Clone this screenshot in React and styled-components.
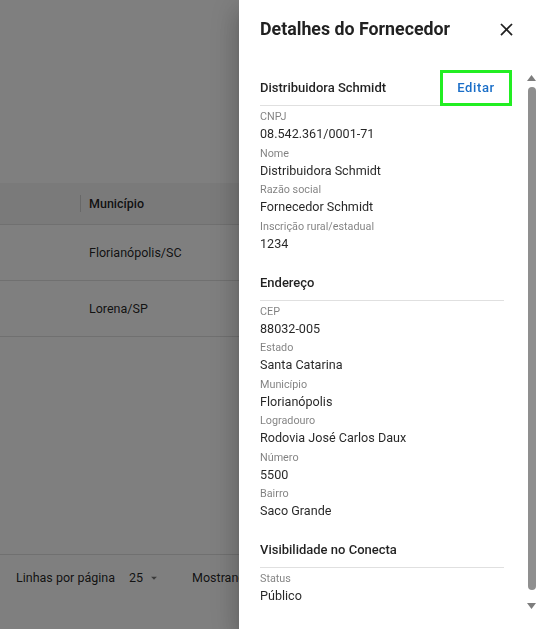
import React from "react";
import styled, { createGlobalStyle } from "styled-components";

const GlobalStyle = createGlobalStyle`
  html, body { margin: 0; padding: 0; }
  body {
    font-family: Roboto, "Noto Sans", Arial, sans-serif;
    color: rgba(0, 0, 0, 0.87);
    overflow: hidden;
  }
  * { box-sizing: border-box; }
`;

/* ---------- page underneath ---------- */

const Page = styled.div`
  height: 100vh;
  background: #ffffff;
  display: flex;
  flex-direction: column;
`;

const Table = styled.div`
  margin-top: 183px;
  display: flex;
  flex-direction: column;
`;

const HeadRow = styled.div`
  height: 42px;
  background: #f5f5f5;
  border-bottom: 1px solid #e0e0e0;
  display: grid;
  grid-template-columns: 80px 1fr;
  align-items: center;
`;

const HeadCell = styled.div`
  height: 100%;
  display: flex;
  align-items: center;
  padding-left: 9px;
  font-size: 12.5px;
  font-weight: 500;
  color: rgba(0, 0, 0, 0.87);
  position: relative;
`;

/* thin divider drawn on the left edge of a header cell */
const ColSep = styled.span`
  position: absolute;
  left: 0;
  top: 12px;
  bottom: 12px;
  width: 1px;
  background: #d0d0d0;
`;

const BodyRow = styled.div`
  height: 56px;
  border-bottom: 1px solid #e0e0e0;
  display: grid;
  grid-template-columns: 80px 1fr;
  align-items: center;
`;

const BodyCell = styled.div`
  padding-left: 9px;
  font-size: 12.5px;
  color: rgba(0, 0, 0, 0.87);
`;

const Footer = styled.div`
  margin-top: auto;
  margin-bottom: 29px;
  height: 46px;
  border-top: 1px solid #e0e0e0;
  display: flex;
  align-items: center;
  padding-left: 16px;
  font-size: 12.5px;
  color: rgba(0, 0, 0, 0.87);
  white-space: nowrap;
`;

const PerPage = styled.div`
  display: flex;
  align-items: center;
  margin-left: 14px;
  gap: 4px;
`;

const Showing = styled.span`
  margin-left: 31px;
`;

/* ---------- drawer ---------- */

const Backdrop = styled.div`
  position: fixed;
  inset: 0;
  background: rgba(0, 0, 0, 0.5);
`;

const Drawer = styled.aside`
  position: fixed;
  top: 0;
  right: 0;
  bottom: 0;
  width: 299px;
  background: #ffffff;
  box-shadow: 0 8px 10px -5px rgba(0, 0, 0, 0.2),
    0 16px 24px 2px rgba(0, 0, 0, 0.14), 0 6px 30px 5px rgba(0, 0, 0, 0.12);
  display: flex;
  flex-direction: column;
  padding-bottom: 15px;
`;

const DrawerHead = styled.div`
  height: 70px;
  display: flex;
  align-items: flex-start;
  justify-content: space-between;
  padding: 16px 21px 0 21px;
`;

const Title = styled.h2`
  margin: 0;
  font-size: 17.8px;
  line-height: 26px;
  font-weight: 700;
  color: rgba(0, 0, 0, 0.87);
`;

const CloseButton = styled.button`
  border: 0;
  background: none;
  padding: 0;
  width: 21px;
  height: 21px;
  margin-top: 3px;
  display: flex;
  align-items: center;
  justify-content: center;
  color: rgba(0, 0, 0, 0.87);
  cursor: pointer;
`;

const Body = styled.div`
  flex: 1;
  display: flex;
  min-height: 0;
`;

const Content = styled.div`
  flex: 0 0 244px;
  margin-left: 21px;
  padding-top: 1px;
`;

const Section = styled.section`
  & + & {
    margin-top: 13px;
  }
`;

const SectionHead = styled.div`
  height: 35px;
  border-bottom: 1px solid #e0e0e0;
  display: flex;
  align-items: center;
  justify-content: space-between;
  padding-bottom: 1px;
  margin-bottom: 3px;
`;

const SectionTitle = styled.h3`
  margin: 0;
  font-size: 13px;
  font-weight: 500;
  color: rgba(0, 0, 0, 0.87);
`;

const EditButton = styled.button`
  flex: none;
  height: 36px;
  width: 72px;
  margin: 0 -8px 0 0;
  border: 3px solid #22ee22;
  background: #ffffff;
  color: #1a6ec8;
  font-family: inherit;
  font-size: 13px;
  font-weight: 500;
  letter-spacing: 0.6px;
  cursor: pointer;
`;

const Field = styled.div`
  display: flex;
  flex-direction: column;
  margin-bottom: 2.5px;
`;

const Label = styled.span`
  font-size: 10.8px;
  line-height: 15px;
  color: rgba(0, 0, 0, 0.5);
`;

const Value = styled.span`
  font-size: 12.6px;
  line-height: 19px;
  color: rgba(0, 0, 0, 0.85);
`;

const ScrollTrack = styled.div`
  margin-left: auto;
  margin-right: 1px;
  width: 11px;
  display: flex;
  flex-direction: column;
  align-items: center;
`;

const ScrollButton = styled.div`
  height: 16px;
  display: flex;
  align-items: center;
  justify-content: center;
  color: #7d7d7d;
`;

const Thumb = styled.div`
  flex: 1;
  width: 8px;
  margin: 1px 0 8px;
  border-radius: 4px;
  background: #8f8f8f;
`;

const Arrow = ({ up }) => (
  <svg width="9" height="6" viewBox="0 0 9 6">
    <path d={up ? "M4.5 0 9 6H0z" : "M0 0h9L4.5 6z"} fill="currentColor" />
  </svg>
);

const CloseIcon = () => (
  <svg width="21" height="21" viewBox="0 0 24 24">
    <path
      fill="currentColor"
      d="M19 6.41 17.59 5 12 10.59 6.41 5 5 6.41 10.59 12 5 17.59 6.41 19 12 13.41 17.59 19 19 17.59 13.41 12z"
    />
  </svg>
);

const sections = [
  {
    title: "Distribuidora Schmidt",
    editable: true,
    fields: [
      ["CNPJ", "08.542.361/0001-71"],
      ["Nome", "Distribuidora Schmidt"],
      ["Razão social", "Fornecedor Schmidt"],
      ["Inscrição rural/estadual", "1234"],
    ],
  },
  {
    title: "Endereço",
    fields: [
      ["CEP", "88032-005"],
      ["Estado", "Santa Catarina"],
      ["Município", "Florianópolis"],
      ["Logradouro", "Rodovia José Carlos Daux"],
      ["Número", "5500"],
      ["Bairro", "Saco Grande"],
    ],
  },
  {
    title: "Visibilidade no Conecta",
    fields: [["Status", "Público"]],
  },
];

export default function App() {
  return (
    <>
      <GlobalStyle />
      <Page>
        <Table>
          <HeadRow>
            <div />
            <HeadCell>
              <ColSep />
              Município
            </HeadCell>
          </HeadRow>
          <BodyRow>
            <div />
            <BodyCell>Florianópolis/SC</BodyCell>
          </BodyRow>
          <BodyRow>
            <div />
            <BodyCell>Lorena/SP</BodyCell>
          </BodyRow>
        </Table>
        <Footer>
          Linhas por página
          <PerPage>
            25
            <svg width="14" height="14" viewBox="0 0 24 24">
              <path d="M7 10l5 5 5-5z" fill="rgba(0,0,0,0.54)" />
            </svg>
          </PerPage>
          <Showing>Mostrando</Showing>
        </Footer>
      </Page>
      <Backdrop />
      <Drawer>
        <DrawerHead>
          <Title>Detalhes do Fornecedor</Title>
          <CloseButton aria-label="Fechar">
            <CloseIcon />
          </CloseButton>
        </DrawerHead>
        <Body>
          <Content>
            {sections.map((s) => (
              <Section key={s.title}>
                <SectionHead>
                  <SectionTitle>{s.title}</SectionTitle>
                  {s.editable && <EditButton>Editar</EditButton>}
                </SectionHead>
                {s.fields.map(([label, value]) => (
                  <Field key={label}>
                    <Label>{label}</Label>
                    <Value>{value}</Value>
                  </Field>
                ))}
              </Section>
            ))}
          </Content>
          <ScrollTrack>
            <ScrollButton>
              <Arrow up />
            </ScrollButton>
            <Thumb />
            <ScrollButton>
              <Arrow />
            </ScrollButton>
          </ScrollTrack>
        </Body>
      </Drawer>
    </>
  );
}
